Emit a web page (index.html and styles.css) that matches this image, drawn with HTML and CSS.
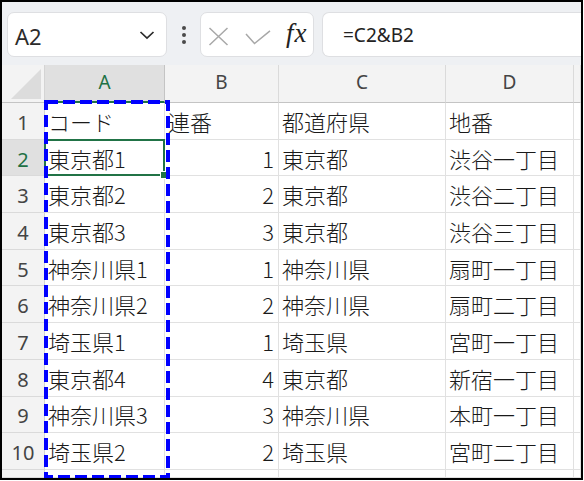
FILE: index.html
```html
<!DOCTYPE html>
<html lang="ja">
<head>
<meta charset="utf-8">
<title>Excel</title>
<link rel="stylesheet" href="styles.css">
</head>
<body>
<div class="frame">
  <div class="toolbar">
    <div class="namebox">
      <span class="ref">A2</span>
      <svg class="chev" width="16" height="10" viewBox="0 0 16 10"><polyline points="1.5,2 8,8.2 14.5,2" fill="none" stroke="#2b2b2b" stroke-width="1.7"/></svg>
    </div>
    <div class="dots"><i></i><i></i><i></i></div>
    <div class="fbtns">
      <svg class="ico-x" width="21" height="19" viewBox="0 0 21 19"><path d="M1.5 1 L19.5 18 M19.5 1 L1.5 18" stroke="#a8a8a8" stroke-width="1.5" fill="none"/></svg>
      <svg class="ico-ok" width="26" height="15" viewBox="0 0 26 15"><polyline points="1,4 9.5,13.5 25,0.8" fill="none" stroke="#a8a8a8" stroke-width="1.5"/></svg>
      <span class="fx">fx</span>
    </div>
    <div class="finput">=C2&amp;B2</div>
  </div>
  <div class="sheet">
    <div class="corner"><svg width="31" height="31" viewBox="0 0 31 31"><polygon points="30,0 30,30 0,30" fill="#dcdcdc"/></svg></div>
    <div class="ch chsel">A</div>
    <div class="ch">B</div>
    <div class="ch">C</div>
    <div class="ch">D</div>
    <div class="ch"></div>

    <div class="rh">1</div><div class="c">コード</div><div class="c">連番</div><div class="c">都道府県</div><div class="c">地番</div><div class="c"></div>
    <div class="rh rhsel">2</div><div class="c active">東京都1</div><div class="c num">1</div><div class="c">東京都</div><div class="c">渋谷一丁目</div><div class="c"></div>
    <div class="rh">3</div><div class="c">東京都2</div><div class="c num">2</div><div class="c">東京都</div><div class="c">渋谷二丁目</div><div class="c"></div>
    <div class="rh">4</div><div class="c">東京都3</div><div class="c num">3</div><div class="c">東京都</div><div class="c">渋谷三丁目</div><div class="c"></div>
    <div class="rh">5</div><div class="c">神奈川県1</div><div class="c num">1</div><div class="c">神奈川県</div><div class="c">扇町一丁目</div><div class="c"></div>
    <div class="rh">6</div><div class="c">神奈川県2</div><div class="c num">2</div><div class="c">神奈川県</div><div class="c">扇町二丁目</div><div class="c"></div>
    <div class="rh">7</div><div class="c">埼玉県1</div><div class="c num">1</div><div class="c">埼玉県</div><div class="c">宮町一丁目</div><div class="c"></div>
    <div class="rh">8</div><div class="c">東京都4</div><div class="c num">4</div><div class="c">東京都</div><div class="c">新宿一丁目</div><div class="c"></div>
    <div class="rh">9</div><div class="c">神奈川県3</div><div class="c num">3</div><div class="c">神奈川県</div><div class="c">本町一丁目</div><div class="c"></div>
    <div class="rh">10</div><div class="c">埼玉県2</div><div class="c num">2</div><div class="c">埼玉県</div><div class="c">宮町二丁目</div><div class="c"></div>
    <div class="rh"></div><div class="c"></div><div class="c"></div><div class="c"></div><div class="c"></div><div class="c"></div>
  </div>
  <svg class="marquee" width="583" height="480" viewBox="0 0 583 480"><rect x="46" y="102" width="122" height="375" fill="none" stroke="#0000ff" stroke-width="4" stroke-dasharray="12 5"/></svg>
</div>
</body>
</html>
```

FILE: styles.css
```css
html, body {
  margin: 0;
  padding: 0;
  background: #ffffff;
}

.frame {
  position: relative;
  width: 583px;
  height: 480px;
  box-sizing: border-box;
  border: 2px solid #000000;
  overflow: hidden;
  display: flex;
  flex-direction: column;
  font-family: "Noto Sans", "Liberation Sans", sans-serif;
}

.toolbar {
  height: 63px;
  flex: none;
  box-sizing: border-box;
  background: #eef0f3;
  padding: 10px 0 8px 5px;
  display: flex;
  align-items: stretch;
}

.namebox {
  width: 160px;
  box-sizing: border-box;
  background: #ffffff;
  border: 1px solid #dedfe2;
  border-radius: 7px;
  padding: 0 11px 0 7px;
  display: flex;
  align-items: center;
  justify-content: space-between;
}

.ref {
  font-size: 22px;
  color: #2b2b2b;
  line-height: 1;
  padding-top: 2px;
}

.chev {
  display: block;
}

.dots {
  width: 33px;
  display: flex;
  flex-direction: column;
  align-items: center;
  justify-content: center;
  gap: 3px;
}

.dots i {
  display: block;
  width: 4px;
  height: 4px;
  border-radius: 50%;
  background: #4a4a4a;
}

.fbtns {
  width: 114px;
  box-sizing: border-box;
  background: #ffffff;
  border: 1px solid #dedfe2;
  border-radius: 7px;
  display: flex;
  align-items: center;
  padding-left: 7px;
}

.ico-x {
  display: block;
  margin-top: 3px;
}

.ico-ok {
  display: block;
  margin-left: 16px;
  margin-top: 5px;
}

.fx {
  margin-left: 15px;
  font-family: "Liberation Serif", "DejaVu Serif", serif;
  font-style: italic;
  font-size: 27px;
  color: #222222;
  letter-spacing: 1px;
  line-height: 1;
  margin-top: -2px;
}

.finput {
  flex: 1;
  margin-left: 8px;
  background: #ffffff;
  border: 1px solid #dedfe2;
  border-right: none;
  border-radius: 7px 0 0 7px;
  padding-left: 20px;
  display: flex;
  align-items: center;
  font-size: 19px;
  color: #222222;
}

.sheet {
  flex: 1;
  display: grid;
  grid-template-columns: 43px 120px 114px 167px 128px 1fr;
  grid-template-rows: 38px repeat(10, 36.7px) 1fr;
}

.corner {
  background: #f3f3f3;
  border-right: 1px solid #d4d4d4;
  border-bottom: 1px solid #c4c4c4;
  box-sizing: border-box;
  display: flex;
  align-items: flex-end;
  justify-content: flex-end;
  padding: 0 2px 2px 0;
}

.corner svg {
  display: block;
}

.ch {
  background: #f3f3f3;
  border-right: 1px solid #dadada;
  border-bottom: 1px solid #c4c4c4;
  box-sizing: border-box;
  display: flex;
  align-items: center;
  justify-content: center;
  font-size: 19px;
  color: #444444;
  padding-bottom: 3px;
}

.chsel {
  background: #e0e0e0;
  color: #1e7145;
  border-right-color: #c4c4c4;
  border-bottom: 2px solid #217346;
}

.rh {
  background: #f3f3f3;
  border-right: 1px solid #d4d4d4;
  border-bottom: 1px solid #dadada;
  box-sizing: border-box;
  display: flex;
  align-items: center;
  justify-content: center;
  font-size: 20px;
  color: #444444;
  padding-top: 3px;
}

.rhsel {
  background: #e0e0e0;
  color: #1e7145;
}

.c {
  border-right: 1px solid #e1e1e1;
  border-bottom: 1px solid #e1e1e1;
  box-sizing: border-box;
  display: flex;
  align-items: center;
  padding-left: 3px;
  font-family: "Noto Sans CJK JP", "Noto Sans", sans-serif;
  font-size: 22px;
  font-weight: 300;
  color: #1a1a1a;
  white-space: nowrap;
  overflow: visible;
  position: relative;
}

.num {
  justify-content: flex-end;
  padding-left: 0;
  padding-right: 4px;
}

.active::before {
  content: "";
  position: absolute;
  top: -1px;
  left: -1px;
  right: -1px;
  bottom: -1px;
  border: 2px solid #217346;
  z-index: 2;
}

.active::after {
  content: "";
  position: absolute;
  right: -4px;
  bottom: -4px;
  width: 6px;
  height: 6px;
  background: #217346;
  border: 1px solid #ffffff;
  z-index: 3;
}

.marquee {
  position: absolute;
  left: -2px;
  top: -2px;
  z-index: 5;
  pointer-events: none;
}
```
